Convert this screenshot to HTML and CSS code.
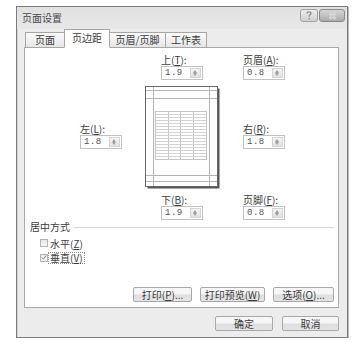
FILE: index.html
```html
<!DOCTYPE html>
<html>
<head>
<meta charset="utf-8" />
<title>页面设置</title>
<link rel="stylesheet" href="styles.css">
</head>
<body>

<div class="dialog">
	<div class="titlebar">
		<span class="title">页面设置</span>
		<div class="caption">
			<span class="cbtn help">
				<svg width="8" height="9" viewBox="0 0 8 9"><path d="M2 2.5 Q2 0.8 4 0.8 Q6 0.8 6 2.5 Q6 3.6 4.3 4.3 L4.3 5.8" fill="none" stroke="#8a8a8a" stroke-width="1.3"/><rect x="3.6" y="7" width="1.4" height="1.4" fill="#8a8a8a"/></svg>
			</span>
			<span class="cbtn close">
				<svg width="9" height="8" viewBox="0 0 9 8"><path d="M1.5 1 L7.5 7 M7.5 1 L1.5 7" stroke="#f4f4f4" stroke-width="2.2"/><path d="M1.5 1 L7.5 7 M7.5 1 L1.5 7" stroke="#9a9a9a" stroke-width="0.8"/></svg>
			</span>
		</div>
	</div>

	<div class="tabs">
		<span class="tab">页面</span>
		<span class="tab active">页边距</span>
		<span class="tab">页眉/页脚</span>
		<span class="tab">工作表</span>
	</div>

	<div class="panel">
		<div class="margins">
			<div class="field mid">
				<div class="label">上(<u>T</u>):</div>
				<div class="spin"><span class="value">1.9</span><span class="arrows"></span></div>
			</div>
			<div class="field right">
				<div class="label">页眉(<u>A</u>):</div>
				<div class="spin"><span class="value">0.8</span><span class="arrows"></span></div>
			</div>

			<div class="field left side">
				<div class="label">左(<u>L</u>):</div>
				<div class="spin"><span class="value">1.8</span><span class="arrows"></span></div>
			</div>
			<div class="preview">
				<svg width="76" height="104" viewBox="0 0 76 104">
					<rect x="2.5" y="2.5" width="72" height="100" fill="#555"/>
					<rect x="0.5" y="0.5" width="72" height="100" fill="#fff" stroke="#6a6a6a"/>
					<g stroke="#b4b4b4" stroke-width="1">
						<line x1="8.5" y1="1" x2="8.5" y2="100"/>
						<line x1="64.5" y1="1" x2="64.5" y2="100"/>
						<line x1="1" y1="4.5" x2="72" y2="4.5"/>
						<line x1="1" y1="12.5" x2="72" y2="12.5"/>
						<line x1="1" y1="89.5" x2="72" y2="89.5"/>
						<line x1="1" y1="95.5" x2="72" y2="95.5"/>
					</g>
					<g stroke="#c4c4c4" stroke-width="1">
						<rect x="10.5" y="25.5" width="51" height="48" fill="none"/>
						<line x1="23.5" y1="25" x2="23.5" y2="74"/>
						<line x1="35.5" y1="25" x2="35.5" y2="74"/>
						<line x1="48.5" y1="25" x2="48.5" y2="74"/>
					</g>
					<g stroke="#d2d2d2" stroke-width="1" id="rows"></g>
				</svg>
			</div>
			<div class="field right side">
				<div class="label">右(<u>R</u>):</div>
				<div class="spin"><span class="value">1.8</span><span class="arrows"></span></div>
			</div>

			<div class="field mid">
				<div class="label">下(<u>B</u>):</div>
				<div class="spin"><span class="value">1.9</span><span class="arrows"></span></div>
			</div>
			<div class="field right">
				<div class="label">页脚(<u>F</u>):</div>
				<div class="spin"><span class="value">0.8</span><span class="arrows"></span></div>
			</div>
		</div>

		<div class="group">
			<div class="grouptitle"><span>居中方式</span><span class="rule"></span></div>
			<div class="check"><span class="box"></span><span class="text">水平(<u>Z</u>)</span></div>
			<div class="check"><span class="box on">
				<svg width="7" height="7" viewBox="0 0 7 7"><path d="M1 3.6 L2.8 5.5 L6 1.2" fill="none" stroke="#777" stroke-width="1"/></svg>
			</span><span class="text focus">垂直(<u>V</u>)</span></div>
		</div>

		<div class="panelbuttons">
			<span class="button b1">打印(<u>P</u>)...</span>
			<span class="button b2">打印预览(<u>W</u>)</span>
			<span class="button b3">选项(<u>O</u>)...</span>
		</div>
	</div>

	<div class="footer">
		<span class="button ok">确定</span>
		<span class="button cancel">取消</span>
	</div>
</div>

<script>
var rows = document.getElementById("rows");
for (var y = 28.5; y < 73; y += 3) {
	var line = document.createElementNS("http://www.w3.org/2000/svg", "line");
	line.setAttribute("x1", "11");
	line.setAttribute("x2", "61");
	line.setAttribute("y1", y);
	line.setAttribute("y2", y);
	rows.appendChild(line);
}
</script>

</body>
</html>
```

FILE: styles.css
```css
body {
	margin: 0;
	background-color: #ffffff;
	font-family: "Noto Sans CJK SC", "Liberation Sans", sans-serif;
	font-size: 10px;
	line-height: 12px;
	color: #3c3c3c;
}
u {
	text-underline-offset: 1px;
}
.dialog {
	box-sizing: border-box;
	width: 332px;
	height: 332px;
	margin: 6px 0 0 16px;
	padding: 0 8px 0 7px;
	border: 1px solid #7c7c7c;
	box-shadow: inset 1px 1px 0 #d0d0d0, 1px 1px 0 #b8b8b8;
	background-color: #ececec;
}
.titlebar {
	display: flex;
	align-items: flex-start;
	height: 22px;
	margin: 0 -8px 0 -7px;
	padding: 0 2px 0 5px;
	background: linear-gradient(#e0e0e0, #e8e8e8);
}
.title {
	flex: 1;
	margin-top: 5px;
	color: #4a4a4a;
}
.caption {
	display: flex;
	margin-top: 2px;
}
.cbtn {
	display: flex;
	align-items: center;
	justify-content: center;
	box-sizing: border-box;
	height: 13px;
	border: 1px solid #a2a2a2;
	border-radius: 3px;
	background: linear-gradient(#eeeeee, #cfcfcf);
}
.help {
	width: 18px;
	margin-right: 1px;
}
.close {
	width: 26px;
	background: linear-gradient(#d6d6d6, #acacac);
	border-color: #8a8a8a;
}
.tabs {
	display: flex;
	align-items: flex-end;
	height: 18px;
	padding-left: 1px;
	position: relative;
	z-index: 1;
}
.tab {
	box-sizing: border-box;
	height: 16px;
	margin-bottom: -1px;
	border: 1px solid #a6a6a6;
	border-right: none;
	background: linear-gradient(#fafafa, #e6e6e6);
	text-align: center;
	line-height: 14px;
}
.tab:nth-child(1) {
	width: 39px;
}
.tab.active {
	width: 46px;
	height: 19px;
	border-right: 1px solid #a6a6a6;
	border-bottom: 1px solid #ffffff;
	background: #ffffff;
	line-height: 16px;
}
.tab:nth-child(3) {
	width: 55px;
	border-left: none;
}
.tab:nth-child(4) {
	width: 42px;
	border-right: 1px solid #a6a6a6;
}
.panel {
	box-sizing: border-box;
	height: 261px;
	border: 1px solid #a9a9a9;
	background-color: #ffffff;
}
.margins {
	display: grid;
	grid-template-columns: 65px 75px auto;
	padding: 6px 0 0 55px;
}
.field.mid {
	grid-column: 2;
	padding-left: 16px;
}
.field.right {
	grid-column: 3;
	padding-left: 23px;
}
.field.left {
	grid-column: 1;
}
.field.side {
	align-self: center;
	margin-bottom: 3px;
}
.label {
	height: 12px;
	white-space: nowrap;
}
.spin {
	display: flex;
	box-sizing: border-box;
	width: 42px;
	height: 14px;
	border: 1px solid #c2c2c2;
	background-color: #ffffff;
}
.value {
	flex: 1;
	padding-left: 3px;
	font-family: "Liberation Mono", monospace;
	font-size: 9px;
	line-height: 12px;
	letter-spacing: 0.5px;
	color: #555555;
}
.arrows {
	width: 11px;
	margin: 1px;
	border: 1px solid #d4d4d4;
	box-sizing: border-box;
	background: linear-gradient(#f4f4f4, #e2e2e2);
	position: relative;
}
.arrows::before, .arrows::after {
	content: "";
	position: absolute;
	left: 2px;
	border-left: 2.5px solid transparent;
	border-right: 2.5px solid transparent;
}
.arrows::before {
	top: 1px;
	border-bottom: 3px solid #a0a0a0;
}
.arrows::after {
	bottom: 1px;
	border-top: 3px solid #a0a0a0;
}
.preview {
	grid-column: 2;
	margin: 6px 0 4px;
	height: 104px;
}
.preview svg {
	display: block;
}
.group {
	padding: 1px 4px 0 5px;
}
.grouptitle {
	display: flex;
	align-items: center;
}
.rule {
	flex: 1;
	margin-left: 4px;
	margin-top: 1px;
	border-top: 1px solid #d6d6d6;
}
.check {
	display: flex;
	align-items: center;
	height: 14.5px;
	margin-left: 10px;
}
.grouptitle + .check {
	margin-top: 3px;
}
.box {
	display: flex;
	align-items: center;
	justify-content: center;
	box-sizing: border-box;
	width: 8px;
	height: 8px;
	margin-right: 2px;
	border: 1px solid #b4b4b4;
	background: linear-gradient(#e6e6e6, #f8f8f8);
}
.text {
	line-height: 11px;
}
.text.focus {
	margin-left: -2px;
	padding: 0 1px;
	border: 1px dotted #8c8c8c;
	line-height: 10px;
}
.panelbuttons {
	display: flex;
	justify-content: flex-end;
	gap: 8px;
	margin-top: 22px;
	padding-right: 4px;
}
.button {
	display: flex;
	align-items: center;
	justify-content: center;
	box-sizing: border-box;
	height: 15px;
	border: 1px solid #a8a8a8;
	border-radius: 2px;
	background: linear-gradient(#f6f6f6 45%, #dedede 55%, #e4e4e4);
	white-space: nowrap;
}
.b1 {
	width: 59px;
}
.b2 {
	width: 65px;
}
.b3 {
	width: 61px;
}
.footer {
	display: flex;
	justify-content: flex-end;
	gap: 9px;
	margin-top: 8px;
}
.ok {
	width: 58px;
}
.cancel {
	width: 57px;
}
```
